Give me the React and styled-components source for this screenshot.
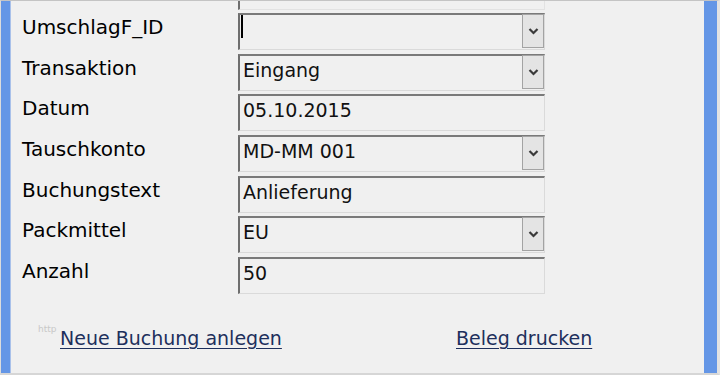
import React from "react";
import styled, { createGlobalStyle } from "styled-components";

// Formularfelder
const fields = [
  { label: "UmschlagF_ID", value: "", combo: true, focused: true },
  { label: "Transaktion", value: "Eingang", combo: true },
  { label: "Datum", value: "05.10.2015" },
  { label: "Tauschkonto", value: "MD-MM 001", combo: true },
  { label: "Buchungstext", value: "Anlieferung" },
  { label: "Packmittel", value: "EU", combo: true },
  { label: "Anzahl", value: "50" },
];

const Chevron = () => (
  <svg width="11" height="8" viewBox="0 0 11 8">
    <polyline points="1.5,2 5.5,6 9.5,2" fill="none" stroke="#3a3a3a" strokeWidth="2.2" />
  </svg>
);

const App = () => {
  return (
    <>
      <GlobalStyle />
      <Page>
        <SideBar />
        <Main>
          <Stub />
          <Form>
            {fields.map((f) => (
              <React.Fragment key={f.label}>
                <Label>{f.label}</Label>
                <Box>
                  <Value>
                    {f.focused && <Caret />}
                    {f.value}
                  </Value>
                  {f.combo && (
                    <DropButton>
                      <Chevron />
                    </DropButton>
                  )}
                </Box>
              </React.Fragment>
            ))}
          </Form>
          <LinkRow>
            <Ghost>http</Ghost>
            <Link href="#">Neue Buchung anlegen</Link>
            <Link href="#">Beleg drucken</Link>
          </LinkRow>
        </Main>
        <SideBar $right />
      </Page>
    </>
  );
};

export default App;

const GlobalStyle = createGlobalStyle`
  body {
    margin: 0;
    background: #f0f0f0;
    font-family: "DejaVu Sans", "Liberation Sans", sans-serif;
  }
`;

const Page = styled.div`
  width: 720px;
  height: 375px;
  box-sizing: border-box;
  display: flex;
  background: #f0f0f0;
  border-top: 1px solid #c4c4c4;
  border-left: 1px solid #dcdcdc;
  border-right: 3px solid #e2e2e2;
  border-bottom: 2px solid #d6d6d6;
`;

const SideBar = styled.div`
  width: ${(p) => (p.$right ? "13px" : "9px")};
  flex-shrink: 0;
  background: #6496e6;
  border-right: ${(p) => (p.$right ? "none" : "1px solid #a9c1ea")};
`;

const Main = styled.div`
  flex: 1;
  display: flex;
  flex-direction: column;
  padding-left: 11px;
`;

const Stub = styled.div`
  margin-left: 216px;
  width: 307px;
  height: 9px;
  box-sizing: border-box;
  border-left: 2px solid #6e6e6e;
  border-bottom: 1px solid #e2e2e2;
  border-right: 1px solid #e2e2e2;
`;

const Form = styled.div`
  margin-top: 3px;
  display: grid;
  grid-template-columns: 216px 307px;
  grid-auto-rows: 40.67px;
  align-items: start;
`;

const Label = styled.div`
  font-size: 20px;
  line-height: 24px;
  padding-top: 2px;
  color: #000;
`;

const Box = styled.div`
  height: 37px;
  box-sizing: border-box;
  display: flex;
  border-top: 2px solid #7a7a7a;
  border-left: 2px solid #6e6e6e;
  border-right: 1px solid #dadada;
  border-bottom: 1px solid #dadada;
`;

const Value = styled.div`
  flex: 1;
  display: flex;
  padding: 3px 0 0 3px;
  font-size: 19px;
  line-height: 22px;
  color: #111;
`;

const Caret = styled.span`
  display: block;
  width: 2px;
  height: 23px;
  margin: -3px 0 0 -2px;
  background: #000;
`;

const DropButton = styled.div`
  width: 22px;
  height: 34px;
  margin-top: -1px;
  box-sizing: border-box;
  display: flex;
  align-items: center;
  justify-content: center;
  background: #e4e4e4;
  border: 1px solid #a3a3a3;
`;

const LinkRow = styled.div`
  margin-top: 29px;
  padding-left: 16px;
  display: grid;
  grid-template-columns: 22px 396px auto;
  align-items: start;
`;

const Ghost = styled.span`
  margin-top: -4px;
  font-size: 9px;
  line-height: 12px;
  color: #c8c8c8;
`;

const Link = styled.a`
  justify-self: start;
  font-size: 19px;
  line-height: 22px;
  color: #1d2f5c;
  text-decoration: underline;
  text-underline-offset: 3px;
  text-decoration-thickness: 1px;
`;
